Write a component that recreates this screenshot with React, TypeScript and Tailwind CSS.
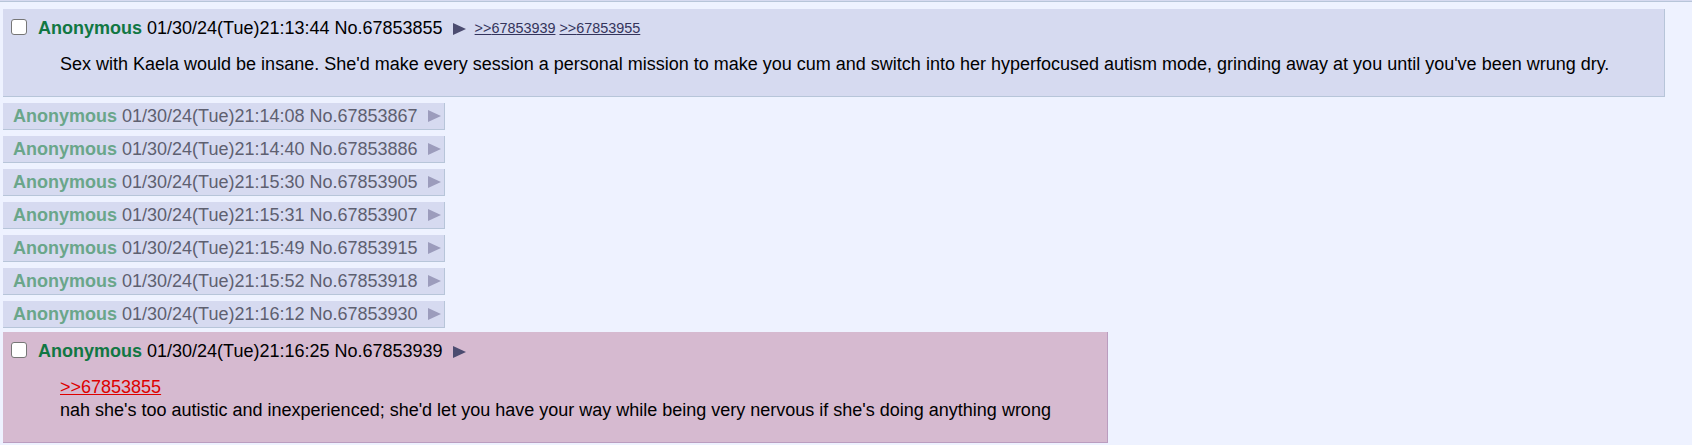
import React from "react";

type Stub = { time: string; no: string };

const STUBS: Stub[] = [
  { time: "21:14:08", no: "67853867" },
  { time: "21:14:40", no: "67853886" },
  { time: "21:15:30", no: "67853905" },
  { time: "21:15:31", no: "67853907" },
  { time: "21:15:49", no: "67853915" },
  { time: "21:15:52", no: "67853918" },
  { time: "21:16:12", no: "67853930" },
];

function Arrow({ className }: { className: string }) {
  return (
    <svg viewBox="0 0 13 12" className={`h-[12px] w-[13px] ${className}`} aria-hidden>
      <path d="M0 0 L13 6 L0 12 Z" fill="currentColor" />
    </svg>
  );
}

function Check() {
  return (
    <span className="mb-[4px] block h-[16px] w-[16px] shrink-0 rounded-[3px] border border-[#767676] bg-white" />
  );
}

function PostHeader({ time, no, backlinks }: { time: string; no: string; backlinks?: string[] }) {
  return (
    <div className="flex h-[25px] items-center pl-[8px]">
      <Check />
      <span className="ml-[11px] font-bold text-[#117743]">Anonymous</span>
      <span className="ml-[5px]">01/30/24(Tue){time}</span>
      <span className="ml-[5px]">No.{no}</span>
      <Arrow className="ml-[10px] text-[#4c4c70]" />
      {backlinks ? (
        <span className="ml-[9px] flex gap-[4px] text-[14.4px]">
          {backlinks.map((b) => (
            <a key={b} className="text-[#34345c] underline">
              &gt;&gt;{b}
            </a>
          ))}
        </span>
      ) : null}
    </div>
  );
}

export default function App() {
  return (
    <div className="min-h-[445px] bg-[#eef2ff] text-[18px] leading-[23px] text-black [font-family:'Liberation_Sans',Arial,sans-serif]">
      <div className="h-[2px] border-b border-[#b7c5d9] bg-[#d6daf0]" />

      <div className="ml-[3px] mt-[7px] w-[1662px] border-b border-r border-[#b7c5d9] bg-[#d6daf0] pb-[20px] pt-[7px]">
        <PostHeader time="21:13:44" no="67853855" backlinks={["67853939", "67853955"]} />
        <p className="ml-[57px] mt-[12px]">
          Sex with Kaela would be insane. She'd make every session a personal mission to make you cum and
          switch into her hyperfocused autism mode, grinding away at you until you've been wrung dry.
        </p>
      </div>

      {STUBS.map((s) => (
        <div
          key={s.no}
          className="ml-[3px] mt-[6px] flex h-[27px] w-[442px] items-center border-b border-r border-[#b7c5d9] bg-[#d6daf0] pl-[10px]"
        >
          <span className="font-bold text-[#6aa68a]">Anonymous</span>
          <span className="ml-[5px] text-[#5e6070]">01/30/24(Tue){s.time}</span>
          <span className="ml-[5px] text-[#5e6070]">No.{s.no}</span>
          <Arrow className="ml-[10px] text-[#9c9cbc]" />
        </div>
      ))}

      <div className="ml-[3px] mt-[4px] w-[1105px] border-b border-r border-[#ba9dbf] bg-[#d6bad0] pb-[20px] pt-[7px]">
        <PostHeader time="21:16:25" no="67853939" />
        <div className="ml-[57px] mt-[12px]">
          <a className="text-[#dd0000] underline">&gt;&gt;67853855</a>
          <br />
          nah she's too autistic and inexperienced; she'd let you have your way while being very nervous if
          she's doing anything wrong
        </div>
      </div>
    </div>
  );
}
